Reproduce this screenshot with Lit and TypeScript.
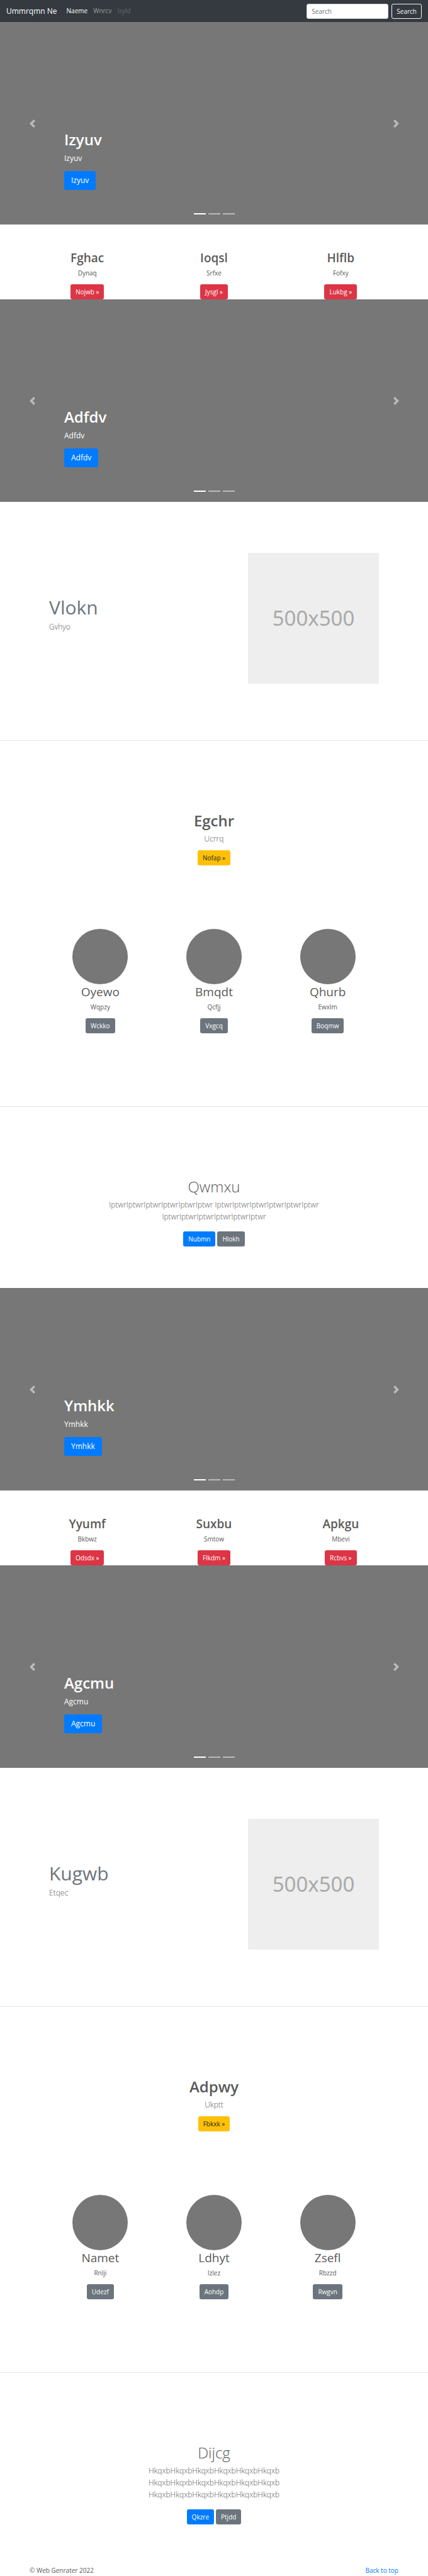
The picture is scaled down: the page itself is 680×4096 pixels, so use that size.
import { LitElement, html, css } from "lit";
import { customElement, property } from "lit/decorators.js";

interface Item {
  title: string;
  text: string;
  action: string;
}

interface Group {
  id: string;
  slides: [string, string];
  services: Item[];
  feature: { title: string; text: string };
  banner: Item;
  people: Item[];
  contact: { title: string; text: string; primary: string; secondary: string };
}

const groups: Group[] = [
  {
    id: "first",
    slides: ["Izyuv", "Adfdv"],
    services: [
      { title: "Fghac", text: "Dynaq", action: "Nojwb »" },
      { title: "Ioqsl", text: "Srfxe", action: "Jysgl »" },
      { title: "Hlflb", text: "Fofxy", action: "Lukbg »" },
    ],
    feature: { title: "Vlokn", text: "Gvhyo" },
    banner: { title: "Egchr", text: "Ucrrq", action: "Nofap »" },
    people: [
      { title: "Oyewo", text: "Wqpzy", action: "Wckko" },
      { title: "Bmqdt", text: "Qcfjj", action: "Vxgcq" },
      { title: "Qhurb", text: "Ewxlm", action: "Boqmw" },
    ],
    contact: {
      title: "Qwmxu",
      text: "IptwrIptwrIptwrIptwrIptwrIptwr IptwrIptwrIptwrIptwrIptwrIptwr IptwrIptwrIptwrIptwrIptwrIptwr",
      primary: "Nubmn",
      secondary: "Hlokh",
    },
  },
  {
    id: "second",
    slides: ["Ymhkk", "Agcmu"],
    services: [
      { title: "Yyumf", text: "Bkbwz", action: "Odsdx »" },
      { title: "Suxbu", text: "Smtow", action: "Flkdm »" },
      { title: "Apkgu", text: "Mbevi", action: "Rcbvs »" },
    ],
    feature: { title: "Kugwb", text: "Etqec" },
    banner: { title: "Adpwy", text: "Ukptt", action: "Fbkxk »" },
    people: [
      { title: "Namet", text: "Rnlji", action: "Udezf" },
      { title: "Ldhyt", text: "Izlez", action: "Aohdp" },
      { title: "Zsefl", text: "Rbzzd", action: "Rwgvn" },
    ],
    contact: {
      title: "Dijcg",
      text: "HkqxbHkqxbHkqxbHkqxbHkqxbHkqxb HkqxbHkqxbHkqxbHkqxbHkqxbHkqxb HkqxbHkqxbHkqxbHkqxbHkqxbHkqxb",
      primary: "Qkzre",
      secondary: "Ptjdd",
    },
  },
];

const shared = css`
  * {
    box-sizing: border-box;
  }
  h1,
  h2,
  p,
  ul {
    margin: 0;
    padding: 0;
  }
  a {
    text-decoration: none;
  }
  .btn {
    display: inline-block;
    padding: 4px 7px;
    border: 1px solid transparent;
    border-radius: 3px;
    background: transparent;
    color: #fff;
    font: 400 10px/14px "Open Sans", "Noto Sans", sans-serif;
    white-space: nowrap;
  }
  .large {
    padding: 5px 10px;
    font-size: 12px;
    line-height: 18px;
  }
  .primary {
    background: #007bff;
  }
  .secondary {
    background: #6c757d;
  }
  .danger {
    background: #dc3545;
  }
  .warning {
    background: #ffc107;
    color: #212529;
  }
`;

@customElement("hero-carousel")
export class HeroCarousel extends LitElement {
  @property() label = "";

  static styles = [
    shared,
    css`
      :host {
        display: block;
      }
      .hero {
        position: relative;
        display: flex;
        flex-direction: column;
        align-items: flex-start;
        justify-content: flex-end;
        min-height: 322px;
        padding: 0 15% 55px;
        background: #777;
        color: #fff;
      }
      .title {
        margin-bottom: 5px;
        font-size: 24px;
        font-weight: 600;
        line-height: 30px;
      }
      .text {
        margin-bottom: 11px;
        font-size: 12px;
        line-height: 19px;
      }
      .text,
      .hero .btn {
        font-weight: 500;
      }
      .control {
        position: absolute;
        top: 0;
        bottom: 0;
        display: flex;
        align-items: center;
        justify-content: center;
        width: 15%;
        padding: 0;
        border: 0;
        background: none;
        color: #fff;
        opacity: 0.5;
      }
      .prev {
        left: 0;
      }
      .next {
        right: 0;
      }
      .control svg {
        width: 13px;
        height: 13px;
        fill: currentColor;
      }
      .dots {
        position: absolute;
        right: 0;
        bottom: 16px;
        left: 0;
        display: flex;
        justify-content: center;
        gap: 4px;
      }
      .dot {
        width: 19px;
        height: 2px;
        padding: 0;
        border: 0;
        background: #fff;
        opacity: 0.5;
      }
      .current {
        opacity: 1;
      }
    `,
  ];

  render() {
    return html`
      <section class="hero">
        <h1 class="title">${this.label}</h1>
        <p class="text">${this.label}</p>
        <a class="btn large primary" href="#">${this.label}</a>
        <button class="control prev" aria-label="Previous">
          <svg viewBox="0 0 8 8"><path d="M5.25 0l-4 4 4 4 1.5-1.5-2.5-2.5 2.5-2.5-1.5-1.5z" /></svg>
        </button>
        <button class="control next" aria-label="Next">
          <svg viewBox="0 0 8 8"><path d="M2.75 0l-1.5 1.5 2.5 2.5-2.5 2.5 1.5 1.5 4-4-4-4z" /></svg>
        </button>
        <div class="dots">
          <button class="dot current" aria-label="Slide 1"></button>
          <button class="dot" aria-label="Slide 2"></button>
          <button class="dot" aria-label="Slide 3"></button>
        </div>
      </section>
    `;
  }
}

@customElement("app-root")
export class AppRoot extends LitElement {
  static styles = [
    shared,
    css`
      :host {
        display: block;
        background: #fff;
        color: #5a5a5a;
        font: 400 10px/15px "Open Sans", "Noto Sans", sans-serif;
      }
      .nav {
        display: flex;
        align-items: center;
        height: 35px;
        padding: 0 10px;
        background: #343a40;
      }
      .brand {
        margin-right: 15px;
        color: #fff;
        font-size: 12px;
        line-height: 19px;
      }
      .links {
        display: flex;
        flex: 1;
        gap: 9px;
        list-style: none;
      }
      .link {
        color: rgba(255, 255, 255, 0.5);
      }
      .active {
        color: #fff;
      }
      .disabled {
        color: rgba(255, 255, 255, 0.25);
      }
      .search {
        display: flex;
        gap: 5px;
      }
      .field {
        width: 130px;
        height: 24px;
        padding: 4px 7px;
        border: 1px solid #ced4da;
        border-radius: 3px;
        background: #fff;
        color: #495057;
        font: inherit;
      }
      .field::placeholder {
        color: #6c757d;
        opacity: 1;
      }
      .outline {
        border-color: #f8f9fa;
        color: #f8f9fa;
      }
      .columns {
        display: grid;
        grid-template-columns: repeat(3, 1fr);
        text-align: center;
      }
      .services {
        padding: 41px 38px 0;
      }
      .people {
        padding: 101px 69px 116px;
      }
      .name {
        margin-bottom: 5px;
        font-size: 19px;
        font-weight: 400;
        line-height: 24px;
      }
      .services .name {
        font-weight: 600;
      }
      .note {
        margin-bottom: 10px;
      }
      .avatar {
        width: 88px;
        height: 88px;
        margin: 0 auto;
        border-radius: 50%;
        background: #777;
      }
      .feature {
        display: flex;
        align-items: center;
        justify-content: space-between;
        padding: 81px 78px 90px;
      }
      .feature-title {
        margin-bottom: 5px;
        color: #6c757d;
        font-size: 30px;
        font-weight: 400;
        line-height: 32px;
      }
      .lead {
        font-size: 12px;
        font-weight: 300;
        line-height: 19px;
      }
      .feature .lead {
        margin-bottom: 10px;
      }
      .placeholder {
        display: flex;
        align-items: center;
        justify-content: center;
        width: 208px;
        height: 208px;
        background: #eee;
        color: #aaa;
        font: 400 33px/40px "Noto Sans", "Open Sans", sans-serif;
      }
      .rule {
        height: 1px;
        margin: 0;
        border: 0;
        background: #e5e5e5;
      }
      .centered {
        padding-top: 112px;
        text-align: center;
      }
      .heading {
        margin-bottom: 5px;
        font-size: 24px;
        font-weight: 600;
        line-height: 29px;
      }
      .thin {
        font-weight: 300;
      }
      .banner .lead {
        margin-bottom: 9px;
      }
      .contact {
        padding-bottom: 66px;
      }
      .contact .lead {
        max-width: 360px;
        margin: 0 auto 14px;
      }
      .actions {
        display: flex;
        justify-content: center;
        gap: 3px;
      }
      .footer {
        display: flex;
        justify-content: space-between;
        padding: 0 47px;
        line-height: 14px;
      }
      .top {
        color: #007bff;
      }
    `,
  ];

  private group(g: Group) {
    return html`
      <hero-carousel label=${g.slides[0]}></hero-carousel>
      <section class="columns services">
        ${g.services.map(
          (s) => html`<div>
            <h2 class="name">${s.title}</h2>
            <p class="note">${s.text}</p>
            <div class="actions"><a class="btn danger" href="#">${s.action}</a></div>
          </div>`
        )}
      </section>
      <hero-carousel label=${g.slides[1]}></hero-carousel>
      <section class="feature">
        <div>
          <h2 class="feature-title">${g.feature.title}</h2>
          <p class="lead">${g.feature.text}</p>
        </div>
        <div class="placeholder">500x500</div>
      </section>
      <hr class="rule" />
      <section class="centered banner">
        <h1 class="heading">${g.banner.title}</h1>
        <p class="lead">${g.banner.text}</p>
        <div class="actions"><a class="btn warning" href="#">${g.banner.action}</a></div>
      </section>
      <section class="columns people">
        ${g.people.map(
          (p) => html`<div>
            <div class="avatar"></div>
            <h2 class="name">${p.title}</h2>
            <p class="note">${p.text}</p>
            <div class="actions"><a class="btn secondary" href="#">${p.action}</a></div>
          </div>`
        )}
      </section>
      <hr class="rule" />
      <section class="centered contact">
        <h1 class="heading thin">${g.contact.title}</h1>
        <p class="lead">${g.contact.text}</p>
        <div class="actions">
          <a class="btn primary" href="#">${g.contact.primary}</a>
          <a class="btn secondary" href="#">${g.contact.secondary}</a>
        </div>
      </section>
    `;
  }

  render() {
    return html`
      <nav class="nav">
        <a class="brand" href="#">Ummrqmn Ne</a>
        <ul class="links">
          <li><a class="link active" href="#">Naeme</a></li>
          <li><a class="link" href="#">Wnrcv</a></li>
          <li><a class="link disabled" href="#" aria-disabled="true">Isyld</a></li>
        </ul>
        <form class="search">
          <input class="field" type="text" placeholder="Search" aria-label="Search" />
          <button class="btn outline" type="button">Search</button>
        </form>
      </nav>
      <main>${groups.map((g) => this.group(g))}</main>
      <footer class="footer">
        <p>© Web Genrater 2022</p>
        <a class="top" href="#">Back to top</a>
      </footer>
    `;
  }
}
